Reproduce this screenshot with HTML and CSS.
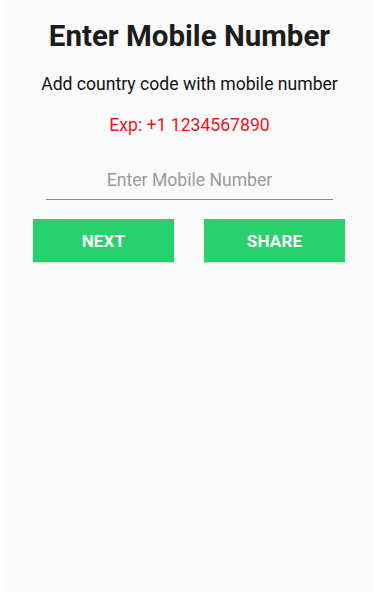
FILE: index.html
```html
<!DOCTYPE html>
<html>
<head>
<meta charset="utf-8">
<link rel="stylesheet" href="styles.css">
</head>
<body>
<div class="screen">
  <h1 class="title">Enter Mobile Number</h1>
  <p class="subtitle">Add country code with mobile number</p>
  <p class="example">Exp: +1 1234567890</p>
  <div class="field">
    <input class="phone" type="text" placeholder="Enter Mobile Number">
  </div>
  <div class="actions">
    <button class="btn">NEXT</button>
    <button class="btn">SHARE</button>
  </div>
</div>
</body>
</html>
```
FILE: styles.css
```css
html, body {
  margin: 0;
  padding: 0;
  background: #ffffff;
}
.screen {
  margin-left: 4px;
  min-height: 592px;
  background: #fafafa;
  font-family: Roboto, "Noto Sans", sans-serif;
  padding-top: 18px;
  box-sizing: border-box;
  padding-left: 2px;
}
.title {
  margin: 0;
  text-align: center;
  font-size: 29.5px;
  font-weight: 700;
  line-height: 36px;
  color: #1c1c1c;
}
.subtitle {
  margin: 18px 0 0;
  text-align: center;
  font-size: 17.6px;
  line-height: 24px;
  color: #111111;
}
.example {
  margin: 17px 0 0;
  text-align: center;
  font-size: 17.6px;
  line-height: 24px;
  color: #f0141e;
}
.field {
  margin: 29px 40px 0 40px;
  border-bottom: 1.5px solid #8a8a8a;
  padding-bottom: 5px;
}
.phone {
  display: block;
  width: 100%;
  border: 0;
  outline: none;
  background: transparent;
  padding: 0;
  text-align: center;
  font-family: Roboto, "Noto Sans", sans-serif;
  font-size: 17.6px;
  line-height: 28px;
  height: 28px;
  color: #222;
}
.phone::placeholder {
  color: #9a9a9a;
}
.actions {
  display: flex;
  gap: 30px;
  margin: 19px 28px 0 27px;
}
.btn {
  flex: 1;
  height: 43px;
  border: 0;
  background: #27d16b;
  color: #ffffff;
  font-family: Roboto, "Noto Sans", sans-serif;
  font-size: 17px;
  font-weight: 700;
  letter-spacing: 0.2px;
  box-shadow: 0 1px 1px rgba(0,0,0,0.15);
  padding: 0;
}
```
